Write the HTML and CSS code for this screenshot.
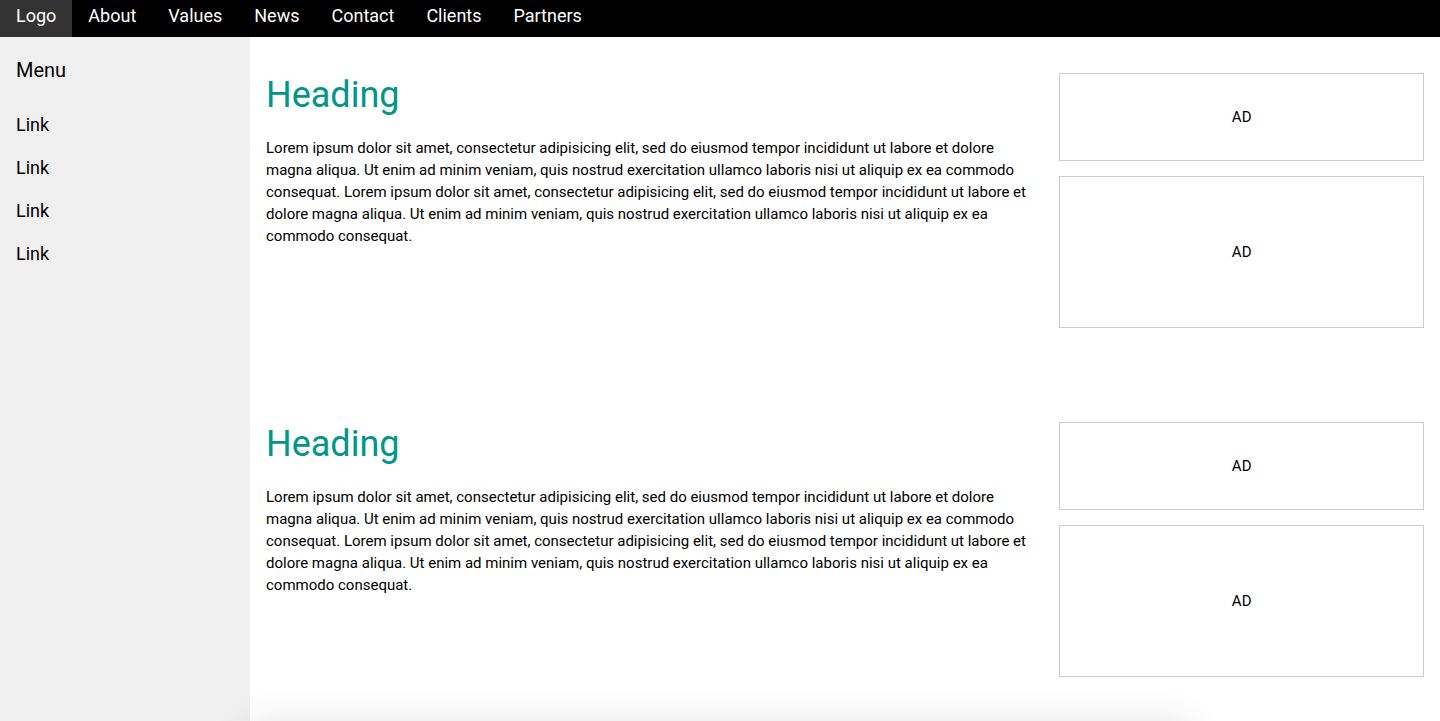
FILE: index.html
```html
<!DOCTYPE html>
<html lang="en">
<head>
<meta charset="utf-8">
<title>Template</title>
<link rel="stylesheet" href="styles.css">
</head>
<body>
<div class="page">
  <nav class="topbar">
    <a class="top-item logo" href="#">Logo</a>
    <a class="top-item" href="#">About</a>
    <a class="top-item" href="#">Values</a>
    <a class="top-item" href="#">News</a>
    <a class="top-item" href="#">Contact</a>
    <a class="top-item" href="#">Clients</a>
    <a class="top-item" href="#">Partners</a>
  </nav>
  <div class="layout">
    <aside class="sidebar">
      <h4 class="menu-title">Menu</h4>
      <a class="side-link" href="#">Link</a>
      <a class="side-link" href="#">Link</a>
      <a class="side-link" href="#">Link</a>
      <a class="side-link" href="#">Link</a>
    </aside>
    <main class="main">
      <section class="row">
        <div class="col-main">
          <h1 class="heading">Heading</h1>
          <p class="text">Lorem ipsum dolor sit amet, consectetur adipisicing elit, sed do eiusmod tempor incididunt ut labore et dolore magna aliqua. Ut enim ad minim veniam, quis nostrud exercitation ullamco laboris nisi ut aliquip ex ea commodo consequat. Lorem ipsum dolor sit amet, consectetur adipisicing elit, sed do eiusmod tempor incididunt ut labore et dolore magna aliqua. Ut enim ad minim veniam, quis nostrud exercitation ullamco laboris nisi ut aliquip ex ea commodo consequat.</p>
        </div>
        <div class="col-side">
          <p class="ad">AD</p>
          <p class="ad ad-tall">AD</p>
        </div>
      </section>
      <section class="row">
        <div class="col-main">
          <h1 class="heading">Heading</h1>
          <p class="text">Lorem ipsum dolor sit amet, consectetur adipisicing elit, sed do eiusmod tempor incididunt ut labore et dolore magna aliqua. Ut enim ad minim veniam, quis nostrud exercitation ullamco laboris nisi ut aliquip ex ea commodo consequat. Lorem ipsum dolor sit amet, consectetur adipisicing elit, sed do eiusmod tempor incididunt ut labore et dolore magna aliqua. Ut enim ad minim veniam, quis nostrud exercitation ullamco laboris nisi ut aliquip ex ea commodo consequat.</p>
        </div>
        <div class="col-side">
          <p class="ad">AD</p>
          <p class="ad ad-tall">AD</p>
        </div>
      </section>
      <div class="footer-card"></div>
    </main>
  </div>
</div>
</body>
</html>
```
FILE: styles.css
```css
* { box-sizing: border-box; }

html, body {
  margin: 0;
  padding: 0;
  background: #fff;
  color: #000;
  font-family: Roboto, "Liberation Sans", Arial, sans-serif;
  font-size: 15px;
}

.page {
  height: 721px;
  overflow: hidden;
  display: flex;
  flex-direction: column;
}

.topbar {
  display: flex;
  height: 37px;
  background: #000;
  flex: none;
}

.top-item {
  display: block;
  padding: 5px 16px 11px;
  font-size: 18px;
  line-height: 21px;
  color: #fff;
  text-decoration: none;
}

.logo {
  background: #333;
}

.layout {
  display: flex;
  flex: 1;
  align-items: stretch;
}

.sidebar {
  width: 250px;
  flex: none;
  background: #f0f0f0;
  padding-top: 8px;
  display: flex;
  flex-direction: column;
}

.menu-title {
  margin: 10px 0 18px;
  padding: 0 16px;
  font-size: 20px;
  line-height: 30px;
  font-weight: 400;
}

.side-link {
  display: block;
  padding: 8px 16px;
  font-size: 18px;
  line-height: 27px;
  color: #000;
  text-decoration: none;
}

.main {
  flex: 1;
  min-width: 0;
}

.row {
  display: flex;
  padding: 21px 0 43px;
}

.col-main {
  width: 793.33px;
  flex: none;
  padding: 0 16px;
}

.col-side {
  flex: 1;
  padding: 15px 16px 0;
}

.heading {
  margin: 16px 0 20px;
  font-size: 36px;
  line-height: 43.2px;
  font-weight: 400;
  color: #009688;
}

.text {
  margin: 0;
  font-size: 15px;
  line-height: 22px;
}

.ad {
  margin: 0 0 15px;
  padding: 32px 16px;
  border: 1px solid #ccc;
  text-align: center;
  font-size: 15px;
  line-height: 22px;
}

.ad-tall {
  padding: 64px 16px;
}

.footer-card {
  width: 937px;
  height: 80px;
  margin-top: -12px;
  background: #fff;
  box-shadow: 0 4px 40px rgba(0, 0, 0, 0.14);
}
```
